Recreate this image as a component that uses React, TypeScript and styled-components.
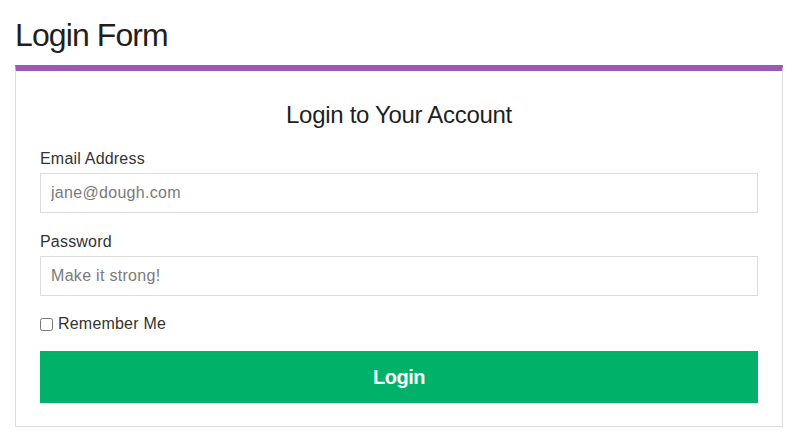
import React from "react";
import styled, { createGlobalStyle } from "styled-components";

const GlobalStyle = createGlobalStyle`
  html, body {
    margin: 0;
    padding: 0;
    background: #ffffff;
  }
  body {
    font-family: "Liberation Sans", Arial, Helvetica, sans-serif;
    color: #333333;
  }
  * { box-sizing: border-box; }
`;

const Page = styled.div`
  padding: 0 18px 0 15px;
`;

const PageTitle = styled.h1`
  margin: 17px 0 12px;
  font-size: 32px;
  line-height: 36px;
  font-weight: 400;
  letter-spacing: -0.9px;
  color: #1f1f1f;
`;

const Card = styled.form`
  border: 1px solid #dddddd;
  border-top: 6px solid #9b59b6;
  padding: 31px 24px 23px;
  display: flex;
  flex-direction: column;
`;

const CardTitle = styled.h2`
  margin: 0 0 20px;
  text-align: center;
  font-size: 24px;
  line-height: 26px;
  font-weight: 400;
  letter-spacing: -0.3px;
  color: #1f1f1f;
`;

const Field = styled.div`
  display: flex;
  flex-direction: column;
  margin-bottom: 18px;
`;

const Label = styled.label`
  font-size: 16px;
  line-height: 22px;
  margin-bottom: 3px;
  letter-spacing: 0.2px;
  color: #333333;
`;

const Input = styled.input`
  height: 40px;
  width: 100%;
  border: 1px solid #dddddd;
  border-radius: 0;
  padding: 0 10px;
  font-family: "Liberation Sans", Arial, Helvetica, sans-serif;
  font-size: 16px;
  letter-spacing: 0.3px;
  color: #333333;
  outline: none;
  &::placeholder {
    color: #7a7a7a;
  }
`;

const CheckRow = styled.label`
  display: flex;
  align-items: center;
  gap: 5px;
  font-size: 16px;
  line-height: 22px;
  letter-spacing: 0.2px;
  color: #333333;
  margin: -1px 0 16px;
`;

const Check = styled.input`
  width: 13px;
  height: 13px;
  margin: 1px 0 0 0;
`;

const SubmitButton = styled.button`
  height: 52px;
  width: 100%;
  border: none;
  border-radius: 0;
  background: #00b16a;
  color: #ffffff;
  font-family: "Liberation Sans", Arial, Helvetica, sans-serif;
  font-size: 20px;
  font-weight: 700;
  letter-spacing: -0.5px;
  cursor: pointer;
`;

export default function App() {
  return (
    <Page>
      <GlobalStyle />
      <PageTitle>Login Form</PageTitle>
      <Card onSubmit={(e) => e.preventDefault()}>
        <CardTitle>Login to Your Account</CardTitle>
        <Field>
          <Label htmlFor="email">Email Address</Label>
          <Input id="email" type="email" placeholder="jane@dough.com" />
        </Field>
        <Field>
          <Label htmlFor="password">Password</Label>
          <Input id="password" type="password" placeholder="Make it strong!" />
        </Field>
        <CheckRow>
          <Check type="checkbox" />
          Remember Me
        </CheckRow>
        <SubmitButton type="submit">Login</SubmitButton>
      </Card>
    </Page>
  );
}
